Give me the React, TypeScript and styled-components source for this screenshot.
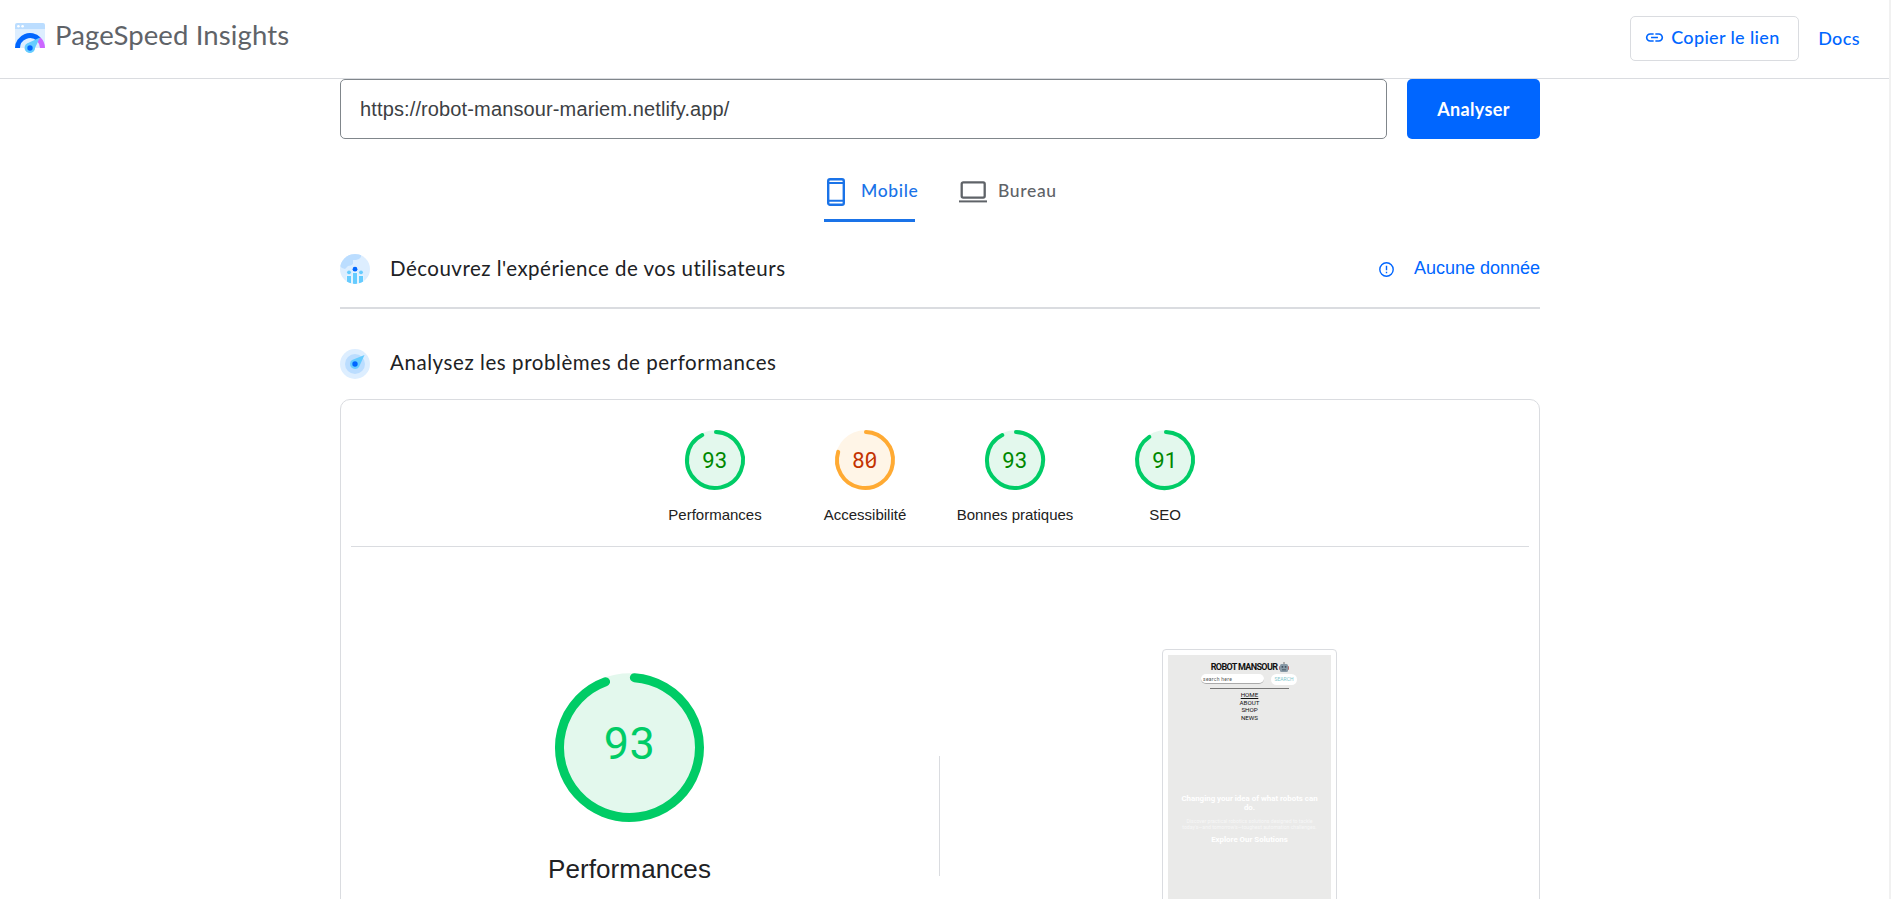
import React from 'react';
import styled, { createGlobalStyle } from 'styled-components';

const brand = "Lato, 'Open Sans', sans-serif";
const body = "'Liberation Sans', Arial, sans-serif";

const Global = createGlobalStyle`
  *, *::before, *::after { box-sizing: border-box; }
  html, body { margin: 0; height: 899px; overflow: hidden; background: #fff; }
  body { font-family: ${body}; color: #202124; }
  svg { display: block; flex: none; overflow: visible; }
`;

const Page = styled.div`
  height: 899px;
  overflow: hidden;
  border-right: 2px solid #f1f1f1;
`;

const Header = styled.header`
  height: 79px;
  display: flex;
  align-items: flex-start;
  justify-content: space-between;
  padding: 16px 29px 0 15px;
  border-bottom: 1px solid #dadce0;
`;

const Brand = styled.div`
  display: flex;
  gap: 10px;
  svg { margin-top: 7px; }
`;

const BrandName = styled.span`
  font: 400 27.5px/38px ${brand};
  letter-spacing: 0.12px;
  color: #5f6368;
  white-space: nowrap;
`;

const Actions = styled.nav`
  display: flex;
  align-items: center;
  gap: 19px;
`;

const CopyButton = styled.button`
  display: flex;
  align-items: center;
  gap: 7px;
  width: 169px;
  height: 45px;
  padding: 0 0 3px 14px;
  background: #fff;
  border: 1px solid #dadce0;
  border-radius: 5px;
  color: #06f;
  font: 500 18px/24px ${brand};
  letter-spacing: 0.35px;
  white-space: nowrap;
`;

const DocsLink = styled.a`
  margin-top: -1px;
  color: #06f;
  font: 500 18px/24px ${brand};
  letter-spacing: 0.4px;
`;

const Main = styled.main`
  width: 1200px;
  margin-left: 340px;
`;

const SearchRow = styled.form`
  display: flex;
  gap: 20px;
  height: 60px;
`;

const UrlField = styled.div`
  flex: 1;
  border: 1px solid #80868b;
  border-radius: 5px;
  padding: 0 19px;
  font: 20px/58px ${body};
  letter-spacing: 0.13px;
  color: #3c4043;
`;

const AnalyzeButton = styled.button`
  width: 133px;
  border: 0;
  border-radius: 5px;
  background: #06f;
  color: #fff;
  font: 700 18px/24px ${brand};
  letter-spacing: 0.35px;
  padding: 0 0 1px;
`;

const Tabs = styled.div`
  display: flex;
  gap: 44px;
  height: 83px;
  padding: 30px 0 0 484px;
`;

const Tab = styled.div<{ $active?: boolean; $gap: number }>`
  display: flex;
  align-items: center;
  gap: ${p => p.$gap}px;
  height: 53px;
  width: 91px;
  padding-bottom: 4px;
  border-bottom: 3px solid ${p => (p.$active ? '#1a73e8' : 'transparent')};
  border-radius: 3px 3px 0 0;
  color: ${p => (p.$active ? '#1a73e8' : '#5f6368')};
  font: 500 17.5px/24px ${brand};
  letter-spacing: 0.65px;
  white-space: nowrap;
`;

const TabLabel = styled.span`
  margin-top: -2px;
`;

const SectionHead = styled.section<{ $ruled?: boolean }>`
  display: flex;
  align-items: center;
  height: ${p => (p.$ruled ? 87 : 90)}px;
  padding-top: ${p => (p.$ruled ? 9 : 19)}px;
  border-bottom: ${p => (p.$ruled ? '2px solid #dadce0' : '0')};
`;

const SectionTitle = styled.h2<{ $track: number }>`
  flex: 1;
  margin: -3px 0 0 20px;
  font: 400 20.5px/28px ${brand};
  letter-spacing: ${p => p.$track}px;
  color: #202124;
`;

const NoData = styled.div`
  display: flex;
  align-items: center;
  gap: 20px;
  margin-top: -2px;
  color: #06f;
  font: 18px/24px ${body};
  svg { margin-top: 2px; }
`;

const Card = styled.section`
  height: 520px;
  border: 1px solid #dadce0;
  border-radius: 10px;
  padding: 0 10px;
`;

const Gauges = styled.div`
  display: flex;
  justify-content: center;
  height: 147px;
  padding-top: 30px;
  border-bottom: 1px solid #dadce0;
`;

const GaugeItem = styled.div`
  width: 150px;
  display: flex;
  flex-direction: column;
  align-items: center;
  gap: 15px;
  font: 15px/20px ${body};
  color: #212121;
`;

const Detail = styled.div`
  display: flex;
  height: 372px;
`;

const ScorePane = styled.div`
  width: 588px;
  display: flex;
  flex-direction: column;
  align-items: center;
  padding: 126px 31px 0 0;
`;

const ScoreName = styled.div`
  margin-top: 31px;
  font: 26px/32px ${body};
  letter-spacing: 0.1px;
`;

const Split = styled.div`
  width: 1px;
  height: 120px;
  margin-top: 209px;
  background: #dadce0;
`;

const ShotPane = styled.div`
  flex: 1;
  padding: 102px 0 0 222px;
`;

const ShotFrame = styled.div`
  width: 175px;
  height: 300px;
  padding: 5px;
  border: 1px solid #dadce0;
  border-radius: 4px;
`;

const Shot = styled.div`
  height: 100%;
  background: #eaeae9;
  display: flex;
  flex-direction: column;
  align-items: center;
  font-family: Roboto, sans-serif;
  color: #111;
  text-align: center;
`;

const ShotTitle = styled.div`
  display: flex;
  align-items: center;
  gap: 2px;
  margin: 6px 0 0 1px;
  font-size: 9px;
  line-height: 12px;
  font-weight: 700;
  letter-spacing: -0.65px;
  white-space: nowrap;
`;

const ShotSearch = styled.div`
  display: flex;
  gap: 7px;
  margin: 1px 0 0 -1px;
`;

const ShotInput = styled.div`
  width: 63px;
  height: 10px;
  border-radius: 5px;
  background: #fff;
  border-bottom: 1px solid #aaa;
  padding-left: 2px;
  text-align: left;
  font-size: 5px;
  line-height: 10px;
  letter-spacing: 0.3px;
  color: #555;
`;

const ShotButton = styled.div`
  width: 26px;
  height: 11px;
  border-radius: 6px;
  background: #fff;
  font-size: 5px;
  line-height: 11px;
  color: #7fc6cc;
`;

const ShotMenu = styled.div`
  width: 79px;
  margin-top: 3px;
  border-top: 1px solid #777;
  padding-top: 3px;
  font-size: 6.2px;
  line-height: 7.5px;
  u { text-underline-offset: 0.5px; }
`;

const ShotHero = styled.div`
  width: 163px;
  margin-top: 72px;
  font-size: 7.9px;
  line-height: 9px;
  font-weight: 700;
  color: #fff;
  white-space: nowrap;
`;

const ShotCopy = styled.div`
  margin: 6px 0 5px;
  font-size: 5.15px;
  line-height: 6px;
  font-weight: 400;
  color: #f7f7f7;
`;

const Logo = () => (
  <svg width="30" height="30" viewBox="0 0 30 30">
    <path d="M0 6h30v19H0z" fill="#def" />
    <path d="M0 6V2q0-2 2-2h26q2 0 2 2v4z" fill="#bdf" />
    <circle cx="3.4" cy="3.2" r="1.3" fill="#fff" />
    <circle cx="7.6" cy="3.2" r="1.3" fill="#fff" />
    <path d="M0 25a15 15 0 0 1 25.6-10.6L22 18a10 10 0 0 0-17 7z" fill="#06f" />
    <path d="M25.6 14.4A15 15 0 0 1 30 25h-5a10 10 0 0 0-3-7z" fill="#c6f" />
    <path d="M25 14.5 19 27a5 5 0 1 1-6-7z" fill="#6cf" />
    <circle cx="15" cy="25" r="5" fill="#6cf" />
    <circle cx="15" cy="25" r="2.7" fill="#06f" />
  </svg>
);

const LinkIcon = () => (
  <svg width="19" height="19" viewBox="1 2 22 20" fill="currentColor">
    <path d="M3.9 12c0-1.71 1.39-3.1 3.1-3.1h4V7H7c-2.76 0-5 2.24-5 5s2.24 5 5 5h4v-1.9H7c-1.71 0-3.1-1.39-3.1-3.1zM8 13h8v-2H8v2zm9-6h-4v1.9h4c1.71 0 3.1 1.39 3.1 3.1s-1.39 3.1-3.1 3.1h-4V17h4c2.76 0 5-2.24 5-5s-2.24-5-5-5z" />
  </svg>
);

const PhoneIcon = () => (
  <svg width="24" height="28" viewBox="0 0 24 28" fill="none" stroke="currentColor">
    <rect x="4.2" y="1.2" width="15.6" height="25.6" rx="1.8" strokeWidth="2.4" />
    <path d="M4 5h16M4 22.8h16" strokeWidth="2" />
  </svg>
);

const LaptopIcon = () => (
  <svg width="28" height="22" viewBox="0 0 28 22" fill="none" stroke="currentColor" strokeWidth="2.3">
    <rect x="2.7" y="1.4" width="23" height="15.2" rx="1.5" />
    <path d="M0 20.4h28" strokeWidth="2" />
  </svg>
);

const UsersIcon = () => (
  <svg width="30" height="30" viewBox="0 0 30 30">
    <clipPath id="disc"><circle cx="15" cy="15" r="15" /></clipPath>
    <g clipPath="url(#disc)">
      <path d="M0 0h30v30H0z" fill="#def" />
      <path d="M0 0h21v3q-2 3-5 3h-3v4q-2 2-5 2l-3 3q-3 0-5-3z" fill="#bdf" />
      <path d="M7 22h4v8H7zM13 19h4v11h-4zM19 22h4v8h-4z" fill="#6cf" stroke="#e8f5ff" strokeWidth="1.6" paintOrder="stroke" />
      <circle cx="9" cy="18.3" r="1.9" fill="#6cf" />
      <circle cx="21" cy="18.3" r="1.9" fill="#6cf" />
      <circle cx="15" cy="15.2" r="2.4" fill="#06f" />
    </g>
  </svg>
);

const CompassIcon = () => (
  <svg width="30" height="30" viewBox="0 0 30 30">
    <circle cx="15" cy="15" r="15" fill="#def" />
    <circle cx="15" cy="15" r="10" fill="#bdf" />
    <path d="M24.5 6 19 18a5 5 0 1 1-7-7z" fill="#6cf" />
    <circle cx="15" cy="15" r="2.7" fill="#06f" />
  </svg>
);

const AlertIcon = () => (
  <svg width="15" height="15" viewBox="0 0 15 15" fill="none" stroke="currentColor" strokeWidth="1.4">
    <circle cx="7.5" cy="7.5" r="6.7" />
    <path d="M7.5 3.8v4.5M7.5 9.7v1.5" />
  </svg>
);

const RobotIcon = () => (
  <svg width="10" height="10" viewBox="0 0 10 10">
    <rect x="0" y="4" width="10" height="4" rx="1" fill="#b56a6a" />
    <rect x="1" y="2" width="8" height="8" rx="1.5" fill="#8799a6" />
    <path d="M5 0v2" stroke="#777" />
    <circle cx="3.4" cy="4.8" r=".9" fill="#3b4a58" />
    <circle cx="6.6" cy="4.8" r=".9" fill="#3b4a58" />
    <path d="M3 7.8h4" stroke="#4d5d69" />
  </svg>
);

type GaugeProps = { score: number; size: number; stroke: number; start: number; end: number; font: number; base: number; color: string; text: string; fill: string };

const Gauge = ({ score, size, stroke, start, end, font, base, color, text, fill }: GaugeProps) => {
  const c = size / 2;
  const r = c - stroke / 2;
  const at = (deg: number) => {
    const a = (deg * Math.PI) / 180;
    return `${c + r * Math.sin(a)} ${c - r * Math.cos(a)}`;
  };
  const digits = String(score).split('');
  const slashX = c + font * 0.3;
  return (
    <svg width={size} height={size} viewBox={`0 0 ${size} ${size}`}>
      <circle cx={c} cy={c} r={c - 0.3} fill={fill} />
      <path d={`M${at(start)}A${r} ${r} 0 1 1 ${at(end)}`} fill="none" stroke={color} strokeWidth={stroke} strokeLinecap="round" />
      <text y={base} fontFamily="Roboto, sans-serif" fontSize={font} fill={text} textAnchor="middle">
        {digits.map((d, i) => <tspan key={i} x={c - 0.3 + (i - 0.5) * font * 0.57}>{d}</tspan>)}
      </text>
      {digits[1] === '0' && (
        <path d={`M${slashX - 4} ${base - 5}L${slashX + 2.6} ${base - 10.5}`} stroke={text} strokeWidth="1.4" />
      )}
    </svg>
  );
};

const green = { color: '#0c6', text: '#080', fill: '#e3f8ed' };
const orange = { color: '#fa3', text: '#c33300', fill: '#fff5e7' };

const scores = [
  { label: 'Performances', score: 93, end: 333, tone: green },
  { label: 'Accessibilité', score: 80, end: 287, tone: orange },
  { label: 'Bonnes pratiques', score: 93, end: 333, tone: green },
  { label: 'SEO', score: 91, end: 326, tone: green },
];

export default function App() {
  return (
    <Page>
      <Global />
      <Header>
        <Brand>
          <Logo />
          <BrandName>PageSpeed Insights</BrandName>
        </Brand>
        <Actions>
          <CopyButton><LinkIcon />Copier le lien</CopyButton>
          <DocsLink>Docs</DocsLink>
        </Actions>
      </Header>
      <Main>
        <SearchRow>
          <UrlField>https://robot-mansour-mariem.netlify.app/</UrlField>
          <AnalyzeButton type="button">Analyser</AnalyzeButton>
        </SearchRow>
        <Tabs>
          <Tab $active $gap={13}><PhoneIcon /><TabLabel>Mobile</TabLabel></Tab>
          <Tab $gap={11}><LaptopIcon /><TabLabel>Bureau</TabLabel></Tab>
        </Tabs>
        <SectionHead $ruled>
          <UsersIcon />
          <SectionTitle $track={0.48}>Découvrez l'expérience de vos utilisateurs</SectionTitle>
          <NoData><AlertIcon />Aucune donnée</NoData>
        </SectionHead>
        <SectionHead>
          <CompassIcon />
          <SectionTitle $track={0.57}>Analysez les problèmes de performances</SectionTitle>
        </SectionHead>
        <Card>
          <Gauges>
            {scores.map(s => (
              <GaugeItem key={s.label}>
                <Gauge score={s.score} size={60} stroke={4} start={2} end={s.end} font={22} base={38} {...s.tone} />
                {s.label}
              </GaugeItem>
            ))}
          </Gauges>
          <Detail>
            <ScorePane>
              <Gauge score={93} size={149} stroke={9} start={4} end={340} font={45} base={86} color="#0c6" text="#0c6" fill="#e3f8ed" />
              <ScoreName>Performances</ScoreName>
            </ScorePane>
            <Split />
            <ShotPane>
              <ShotFrame>
                <Shot>
                  <ShotTitle>ROBOT MANSOUR <RobotIcon /></ShotTitle>
                  <ShotSearch>
                    <ShotInput>search here</ShotInput>
                    <ShotButton>SEARCH</ShotButton>
                  </ShotSearch>
                  <ShotMenu>
                    <u>HOME</u><br />ABOUT<br />SHOP<br />NEWS
                  </ShotMenu>
                  <ShotHero>
                    Changing your idea of what robots can<br />do.
                    <ShotCopy>
                      Discover practical robotics solutions designed to tackle<br />
                      today's—and tomorrow's—toughest automation challenges.
                    </ShotCopy>
                    Explore Our Solutions
                  </ShotHero>
                </Shot>
              </ShotFrame>
            </ShotPane>
          </Detail>
        </Card>
      </Main>
    </Page>
  );
}
